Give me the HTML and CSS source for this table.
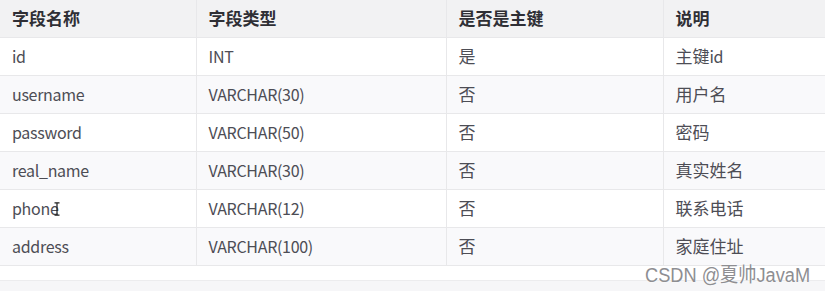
FILE: index.html
```html
<!DOCTYPE html>
<html lang="zh-CN">
<head>
<meta charset="utf-8">
<link rel="stylesheet" href="styles.css">
</head>
<body>
<div class="page">
  <div class="card">
    <table class="fields">
      <thead>
        <tr><th>字段名称</th><th>字段类型</th><th>是否是主键</th><th>说明</th></tr>
      </thead>
      <tbody>
        <tr><td>id</td><td>INT</td><td>是</td><td>主键<span class="latin">id</span></td></tr>
        <tr><td>username</td><td>VARCHAR(30)</td><td>否</td><td>用户名</td></tr>
        <tr><td>password</td><td>VARCHAR(50)</td><td>否</td><td>密码</td></tr>
        <tr><td>real_name</td><td>VARCHAR(30)</td><td>否</td><td>真实姓名</td></tr>
        <tr><td>phone<svg class="caret" width="6" height="14" viewBox="0 0 6 14"><path d="M0.5 0.8h2.5v12.4h-2.5M5.5 0.8h-2.5M5.5 13.2h-2.5" fill="none" stroke="#1e1e1e" stroke-width="1.2"/></svg></td><td>VARCHAR(12)</td><td>否</td><td>联系电话</td></tr>
        <tr><td>address</td><td>VARCHAR(100)</td><td>否</td><td>家庭住址</td></tr>
      </tbody>
    </table>
  </div>
  <div class="watermark">CSDN @夏帅JavaM</div>
</div>
</body>
</html>
```

FILE: styles.css
```css
html, body {
  margin: 0;
  padding: 0;
  background: #f6f6f8;
}
body {
  font-family: "Noto Sans CJK SC", "Noto Sans", sans-serif;
  width: 825px;
  height: 291px;
  overflow: hidden;
}
.page {
  position: relative;
  height: 291px;
}
.card {
  background: #ffffff;
  padding-bottom: 14px;
  border-bottom: 1px solid #ececee;
}
.fields {
  border-collapse: collapse;
  width: 840px;
  table-layout: fixed;
  font-size: 17px;
  color: #4d4d55;
}
.fields th, .fields td {
  text-align: left;
  padding: 0 0 0 12px;
  height: 38px;
  box-sizing: border-box;
  border-bottom: 1px solid #e8e8ea;
  border-right: 1px solid #e8e8ea;
  white-space: nowrap;
  line-height: 20px;
}
.fields td:nth-child(1), .fields td:nth-child(2), .latin {
  font-size: 16px;
  letter-spacing: -0.3px;
}
.fields th:nth-child(1), .fields td:nth-child(1) { width: 196px; }
.fields th:nth-child(2), .fields td:nth-child(2) { width: 250px; }
.fields th:nth-child(3), .fields td:nth-child(3) { width: 217px; }
.fields th:last-child, .fields td:last-child { border-right: none; }
.fields th {
  background: #f2f2f3;
  font-weight: 700;
  color: #2f2f35;
  height: 37px;
}
.fields tbody tr:nth-child(even) td {
  background: #f9f9fb;
}
.caret {
  display: inline-block;
  margin-left: -4px;
  vertical-align: -1px;
}
.watermark {
  position: absolute;
  left: 645px;
  top: 259px;
  font-family: "Liberation Sans", "Noto Sans CJK SC", sans-serif;
  font-size: 20px;
  color: #8e8e92;
  text-shadow: 0 0 2px #ffffff, 0 0 1px #ffffff;
  white-space: nowrap;
  transform: scaleX(0.91);
  transform-origin: left center;
}
```
